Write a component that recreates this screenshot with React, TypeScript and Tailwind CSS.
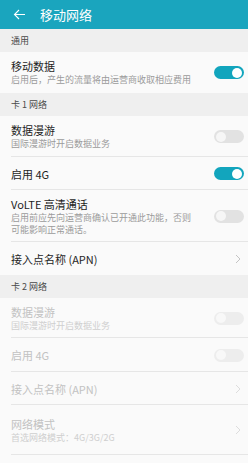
import React from "react";

const font = { fontFamily: '"Noto Sans CJK SC", "Noto Sans", sans-serif' };

function Toggle({ on, disabled }: { on: boolean; disabled?: boolean }) {
  if (on) {
    return (
      <div className="relative w-[30px] h-[13px] rounded-full bg-[#12a5bd] shrink-0">
        <div className="absolute right-[2px] top-[1.5px] w-[10px] h-[10px] rounded-full bg-white" />
      </div>
    );
  }
  return (
    <div className={`relative w-[30px] h-[13px] rounded-full shrink-0 ${disabled ? "bg-[#ededed]" : "bg-[#e2e2e2]"}`}>
      <div className={`absolute left-[2px] top-[1.5px] w-[10px] h-[10px] rounded-full ${disabled ? "bg-[#f8f8f8]" : "bg-[#f6f6f6]"}`} />
    </div>
  );
}

function Chevron({ disabled }: { disabled?: boolean }) {
  return (
    <svg width="6" height="10" viewBox="0 0 6 10" className="shrink-0 mr-[3px]">
      <path d="M1 1 L5 5 L1 9" fill="none" stroke={disabled ? "#dddddd" : "#c4c4c4"} strokeWidth="1" />
    </svg>
  );
}

function Section({ label }: { label: string }) {
  return (
    <div className="h-[23px] bg-[#efefef] px-[11px] flex items-center text-[9px] text-[#4a4a4a]">{label}</div>
  );
}

function Row({
  title,
  sub,
  h,
  right,
  disabled,
  divider = true,
}: {
  title: string;
  sub?: string;
  h: string;
  right: React.ReactNode;
  disabled?: boolean;
  divider?: boolean;
}) {
  return (
    <div className={`relative bg-[#fafafa] flex items-center pl-[11px] pr-[4px] ${h}`}>
      <div className="w-[188px] flex flex-col">
        <div className={`text-[11px] leading-[14px] ${disabled ? "text-[#c2c2c2]" : "text-[#1e1e1e]"}`}>{title}</div>
        {sub && (
          <div className={`text-[9px] leading-[12px] mt-[1px] ${disabled ? "text-[#cfcfcf]" : "text-[#9a9a9a]"}`}>{sub}</div>
        )}
      </div>
      <div className="flex-1" />
      {right}
      {divider && <div className="absolute left-[11px] right-0 bottom-0 h-px bg-[#e6e6e6]" />}
    </div>
  );
}

export default function App() {
  return (
    <div className="w-[248px] h-[463px] overflow-hidden bg-[#fafafa]" style={font}>
      <div className="h-[29px] bg-[#1aa5be] flex items-center">
        <svg width="13" height="11" viewBox="0 0 13 11" className="ml-[13px]">
          <path d="M12 5.5 H1.5 M6 1 L1.5 5.5 L6 10" fill="none" stroke="white" strokeWidth="1.1" />
        </svg>
        <div className="ml-[14px] text-[13px] text-white leading-none">移动网络</div>
      </div>
      <Section label="通用" />
      <Row title="移动数据" sub="启用后，产生的流量将由运营商收取相应费用" h="h-[41px]" right={<Toggle on />} divider={false} />
      <Section label="卡 1 网络" />
      <Row title="数据漫游" sub="国际漫游时开启数据业务" h="h-[41px]" right={<Toggle on={false} />} />
      <Row title="启用 4G" h="h-[33px]" right={<Toggle on />} />
      <Row
        title="VoLTE 高清通话"
        sub="启用前应先向运营商确认已开通此功能，否则可能影响正常通话。"
        h="h-[52px]"
        right={<Toggle on={false} />}
      />
      <Row title="接入点名称 (APN)" h="h-[33px]" right={<Chevron />} divider={false} />
      <Section label="卡 2 网络" />
      <Row title="数据漫游" sub="国际漫游时开启数据业务" h="h-[40px]" right={<Toggle on={false} disabled />} disabled />
      <Row title="启用 4G" h="h-[34px]" right={<Toggle on={false} disabled />} disabled />
      <Row title="接入点名称 (APN)" h="h-[33px]" right={<Chevron disabled />} disabled />
      <Row title="网络模式" sub="首选网络模式：4G/3G/2G" h="h-[50px]" right={<Chevron disabled />} disabled />
      <Row title="网络运营商" h="h-[33px]" right={<Chevron disabled />} disabled divider={false} />
    </div>
  );
}
